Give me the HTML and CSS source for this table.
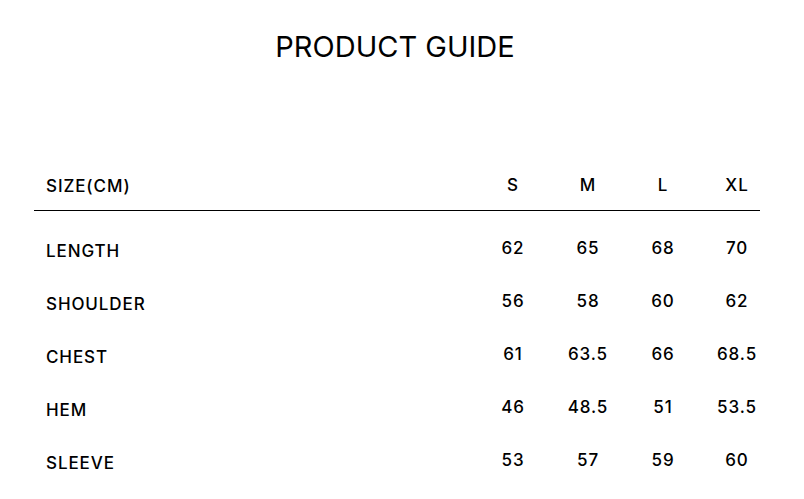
FILE: index.html
```html
<!DOCTYPE html>
<html>
<head>
<meta charset="utf-8">
<link rel="stylesheet" href="styles.css">
</head>
<body>
<div class="page">
  <h1 class="title">PRODUCT GUIDE</h1>
  <div class="table">
    <div class="row head">
      <div class="label">SIZE(CM)</div>
      <div class="cell">S</div>
      <div class="cell">M</div>
      <div class="cell">L</div>
      <div class="cell">XL</div>
    </div>
    <div class="rule"></div>
    <div class="row">
      <div class="label">LENGTH</div>
      <div class="cell">62</div><div class="cell">65</div><div class="cell">68</div><div class="cell">70</div>
    </div>
    <div class="row">
      <div class="label">SHOULDER</div>
      <div class="cell">56</div><div class="cell">58</div><div class="cell">60</div><div class="cell">62</div>
    </div>
    <div class="row">
      <div class="label">CHEST</div>
      <div class="cell">61</div><div class="cell">63.5</div><div class="cell">66</div><div class="cell">68.5</div>
    </div>
    <div class="row">
      <div class="label">HEM</div>
      <div class="cell">46</div><div class="cell">48.5</div><div class="cell">51</div><div class="cell">53.5</div>
    </div>
    <div class="row">
      <div class="label">SLEEVE</div>
      <div class="cell">53</div><div class="cell">57</div><div class="cell">59</div><div class="cell">60</div>
    </div>
  </div>
</div>
</body>
</html>
```

FILE: styles.css
```css
html, body {
  margin: 0;
  padding: 0;
  background: #fff;
}
body {
  font-family: Inter, "Liberation Sans", sans-serif;
  color: #000;
  width: 804px;
  height: 499px;
  overflow: hidden;
}
.page {
  padding: 0 0 0 34px;
}
.title {
  margin: 0;
  padding-top: 29px;
  height: 36px;
  line-height: 36px;
  font-size: 29px;
  font-weight: 400;
  text-align: center;
  width: 722px;
}
.table {
  margin-top: 104px;
  width: 739.5px;
}
.row {
  display: grid;
  grid-template-columns: 1fr 75px 75px 75px 73px;
  align-items: center;
  height: 53px;
  font-size: 17px;
  font-weight: 450;
  letter-spacing: 0.9px;
}
.row.head {
  height: 31px;
  padding-bottom: 10px;
}
.label {
  padding-left: 12px;
  padding-top: 6px;
}
.head .label {
  padding-top: 2px;
}
.cell {
  text-align: center;
}
.rule {
  height: 1px;
  background: #000;
  width: 726px;
  margin-bottom: 10px;
}
```
